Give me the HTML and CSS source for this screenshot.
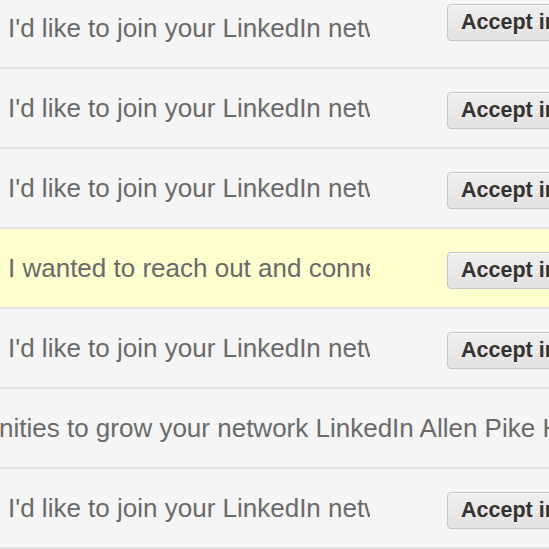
FILE: index.html
```html
<!DOCTYPE html>
<html lang="en">
<head>
<meta charset="utf-8">
<title>Invitations</title>
<link rel="stylesheet" href="styles.css">
</head>
<body>
<div class="list">
  <div class="row">
    <div class="msg">I'd like to join your LinkedIn network.</div>
    <button class="accept raised">Accept invitation</button>
  </div>
  <div class="row">
    <div class="msg">I'd like to join your LinkedIn network.</div>
    <button class="accept">Accept invitation</button>
  </div>
  <div class="row">
    <div class="msg">I'd like to join your LinkedIn network.</div>
    <button class="accept">Accept invitation</button>
  </div>
  <div class="row highlight">
    <div class="msg">I wanted to reach out and connect with you.</div>
    <button class="accept">Accept invitation</button>
  </div>
  <div class="row">
    <div class="msg">I'd like to join your LinkedIn network.</div>
    <button class="accept">Accept invitation</button>
  </div>
  <div class="row scrolled">
    <div class="msg wide">nities to grow your network LinkedIn Allen Pike Hi Allen</div>
  </div>
  <div class="row">
    <div class="msg">I'd like to join your LinkedIn network.</div>
    <button class="accept">Accept invitation</button>
  </div>
  <div class="row">
    <div class="msg">I'd like to join your LinkedIn network.</div>
    <button class="accept">Accept invitation</button>
  </div>
</div>
</body>
</html>
```

FILE: styles.css
```css
html, body {
  margin: 0;
  padding: 0;
  background: #f5f5f5;
  overflow: hidden;
}

.list {
  margin-top: -11px;
}

.row {
  display: flex;
  align-items: center;
  height: 78px;
  padding-left: 8px;
  border-bottom: 2px solid #e2e2e2;
  overflow: hidden;
  background: #f5f5f5;
}

.row.highlight {
  background: #fefecf;
}

.msg {
  flex: none;
  width: 362px;
  white-space: nowrap;
  overflow: hidden;
  font-family: "Liberation Sans", Arial, sans-serif;
  font-size: 26px;
  color: #6a6a6a;
}

.row.scrolled {
  padding-left: 0;
}

.msg.wide {
  width: auto;
  margin-left: -1px;
}

.accept {
  flex: none;
  margin-left: 77px;
  margin-top: 4px;
  height: 37px;
  padding: 0 13px;
  border: 1px solid #c6c6c6;
  border-radius: 4px;
  background: linear-gradient(#efefef, #e2e2e2);
  box-shadow: 0 1px 0 rgba(255, 255, 255, 0.6) inset;
  font-family: "Liberation Sans", Arial, sans-serif;
  font-weight: bold;
  font-size: 21.5px;
  color: #333;
  white-space: nowrap;
}

.accept.raised {
  margin-top: -12px;
}
```
